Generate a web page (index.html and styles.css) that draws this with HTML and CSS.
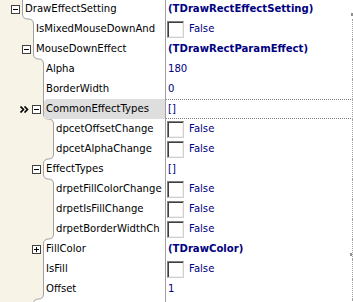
FILE: index.html
```html
<!DOCTYPE html>
<html lang="en">
<head>
    <meta charset="UTF-8">
    <title>Object Inspector</title>
    <link rel="stylesheet" href="styles.css">
</head>
<body>
    <div class="inspector">
        <!-- cream gutter with the stepped indent line -->
        <svg class="gutter" width="165" height="320" viewBox="0 0 165 320">
            <path fill="#f7f3e6" d="M0 0 H22.5 V15 Q22.5 20 28 20 T33.5 25 V55 Q33.5 60 38.5 60 T43.5 65 V115 Q43.5 120 48.5 120 T53.5 125 V155 Q53.5 160 48.5 160 T43.5 165 V175 Q43.5 180 48.5 180 T53.5 185 V235 Q53.5 240 48.5 240 T43.5 245 V295 Q43.5 300 38.5 300 T33.5 305 V320 H0 Z"/>
            <path fill="none" stroke="#a0a0a0" d="M22.5 0 V15 Q22.5 20 28 20 T33.5 25 V55 Q33.5 60 38.5 60 T43.5 65 V115 Q43.5 120 48.5 120 T53.5 125 V155 Q53.5 160 48.5 160 T43.5 165 V175 Q43.5 180 48.5 180 T53.5 185 V235 Q53.5 240 48.5 240 T43.5 245 V295 Q43.5 300 38.5 300 T33.5 305 V320"/>
        </svg>

        <div class="row first">
            <div class="left"><span class="gut lvl0"><span class="exp minus"></span></span><span class="name">DrawEffectSetting</span></div>
            <div class="val obj">(TDrawRectEffectSetting)<i class="tick"></i></div>
        </div>
        <div class="row">
            <div class="left"><span class="gut lvl1"></span><span class="name">IsMixedMouseDownAnd</span></div>
            <div class="val"><span class="check"></span><span class="bool">False</span></div>
        </div>
        <div class="row">
            <div class="left"><span class="gut lvl1"><span class="exp minus"></span></span><span class="name">MouseDownEffect</span></div>
            <div class="val obj">(TDrawRectParamEffect)</div>
        </div>
        <div class="row">
            <div class="left"><span class="gut lvl2"></span><span class="name">Alpha</span></div>
            <div class="val">180</div>
        </div>
        <div class="row">
            <div class="left"><span class="gut lvl2"></span><span class="name">BorderWidth</span></div>
            <div class="val">0</div>
        </div>
        <div class="row selected">
            <div class="left">
                <span class="gut lvl2">
                    <svg class="arrow" width="9" height="7" viewBox="0 0 9 7"><path d="M0.5 0.5 L3.5 3.5 L0.5 6.5 M4.5 0.5 L7.5 3.5 L4.5 6.5" fill="none" stroke="#000" stroke-width="1.6"/></svg>
                    <span class="exp minus"></span>
                </span>
                <span class="name">CommonEffectTypes</span>
            </div>
            <div class="val">[]</div>
        </div>
        <div class="row">
            <div class="left"><span class="gut lvl3"></span><span class="name">dpcetOffsetChange</span></div>
            <div class="val"><span class="check"></span><span class="bool">False</span></div>
        </div>
        <div class="row">
            <div class="left"><span class="gut lvl3"></span><span class="name">dpcetAlphaChange</span></div>
            <div class="val"><span class="check"></span><span class="bool">False</span></div>
        </div>
        <div class="row">
            <div class="left"><span class="gut lvl2"><span class="exp minus"></span></span><span class="name">EffectTypes</span></div>
            <div class="val">[]</div>
        </div>
        <div class="row">
            <div class="left"><span class="gut lvl3"></span><span class="name">drpetFillColorChange</span></div>
            <div class="val"><span class="check"></span><span class="bool">False</span></div>
        </div>
        <div class="row">
            <div class="left"><span class="gut lvl3"></span><span class="name">drpetIsFillChange</span></div>
            <div class="val"><span class="check"></span><span class="bool">False</span></div>
        </div>
        <div class="row">
            <div class="left"><span class="gut lvl3"></span><span class="name">drpetBorderWidthCh</span></div>
            <div class="val"><span class="check"></span><span class="bool">False</span></div>
        </div>
        <div class="row">
            <div class="left"><span class="gut lvl2"><span class="exp plus"></span></span><span class="name">FillColor</span></div>
            <div class="val obj">(TDrawColor)<i class="tick"></i></div>
        </div>
        <div class="row">
            <div class="left"><span class="gut lvl2"></span><span class="name">IsFill</span></div>
            <div class="val"><span class="check"></span><span class="bool">False</span></div>
        </div>
        <div class="row">
            <div class="left"><span class="gut lvl2"></span><span class="name">Offset</span></div>
            <div class="val">1</div>
        </div>
        <div class="row">
            <div class="left"><span class="gut lvl1"></span><span class="name"></span></div>
            <div class="val"></div>
        </div>
    </div>
</body>
</html>
```

FILE: styles.css
```css
* {
    box-sizing: border-box;
    margin: 0;
    padding: 0;
}

body {
    background: #fff;
    overflow: hidden;
    font-family: 'DejaVu Sans', sans-serif;
    font-size: 10.1px;
    color: #000;
}

.inspector {
    position: relative;
    width: 353px;
    margin-top: -1px;
}

.gutter {
    position: absolute;
    top: 0;
    left: 0;
}

.row {
    position: relative;
    display: flex;
    height: 20px;
    line-height: 20px;
}

.left {
    display: flex;
    width: 166px;
    flex: none;
    border-right: 1px solid #a0a0a0;
}

.gut {
    display: flex;
    align-items: center;
    justify-content: flex-end;
    flex: none;
    padding-right: 2px;
}

.lvl0 { width: 22px; }
.lvl1 { width: 33px; }
.lvl2 { width: 43px; }
.lvl3 { width: 53px; }

.name {
    flex: 1;
    padding-left: 3px;
    white-space: nowrap;
    overflow: hidden;
}

.exp {
    position: relative;
    width: 9px;
    height: 9px;
    border: 1px solid #404040;
    background: #fff;
}

.exp::before {
    content: "";
    position: absolute;
    left: 1px;
    top: 3px;
    width: 5px;
    height: 1px;
    background: #000;
}

.plus::after {
    content: "";
    position: absolute;
    left: 3px;
    top: 1px;
    width: 1px;
    height: 5px;
    background: #000;
}

.arrow {
    margin-right: 3px;
}

.val {
    display: flex;
    align-items: center;
    flex: 1;
    padding-left: 2px;
    color: #000080;
    white-space: nowrap;
    overflow: hidden;
    border-right: 1px dotted #a0a0a0;
}

.first .val {
    border-right: none;
}

.obj {
    font-weight: bold;
}

.tick {
    align-self: flex-start;
    width: 2px;
    height: 3px;
    margin-top: 14px;
    margin-left: auto;
    background: #909090;
}

.check {
    width: 17px;
    height: 17px;
    margin-left: -1px;
    background: #fff;
    border: 1px solid;
    border-color: #808080 #d4d0c8 #d4d0c8 #808080;
    box-shadow: inset 1px 1px 0 #404040, inset -1px -1px 0 #f0f0f0;
}

.bool {
    margin-left: 5px;
}

.selected .name {
    margin-left: 1px;
    padding-left: 2px;
    background: #dedede;
    border-top-left-radius: 4px;
}

.selected .val {
    border-top: 1px dotted #808080;
    border-bottom: 1px dotted #808080;
    line-height: 18px;
}
```
